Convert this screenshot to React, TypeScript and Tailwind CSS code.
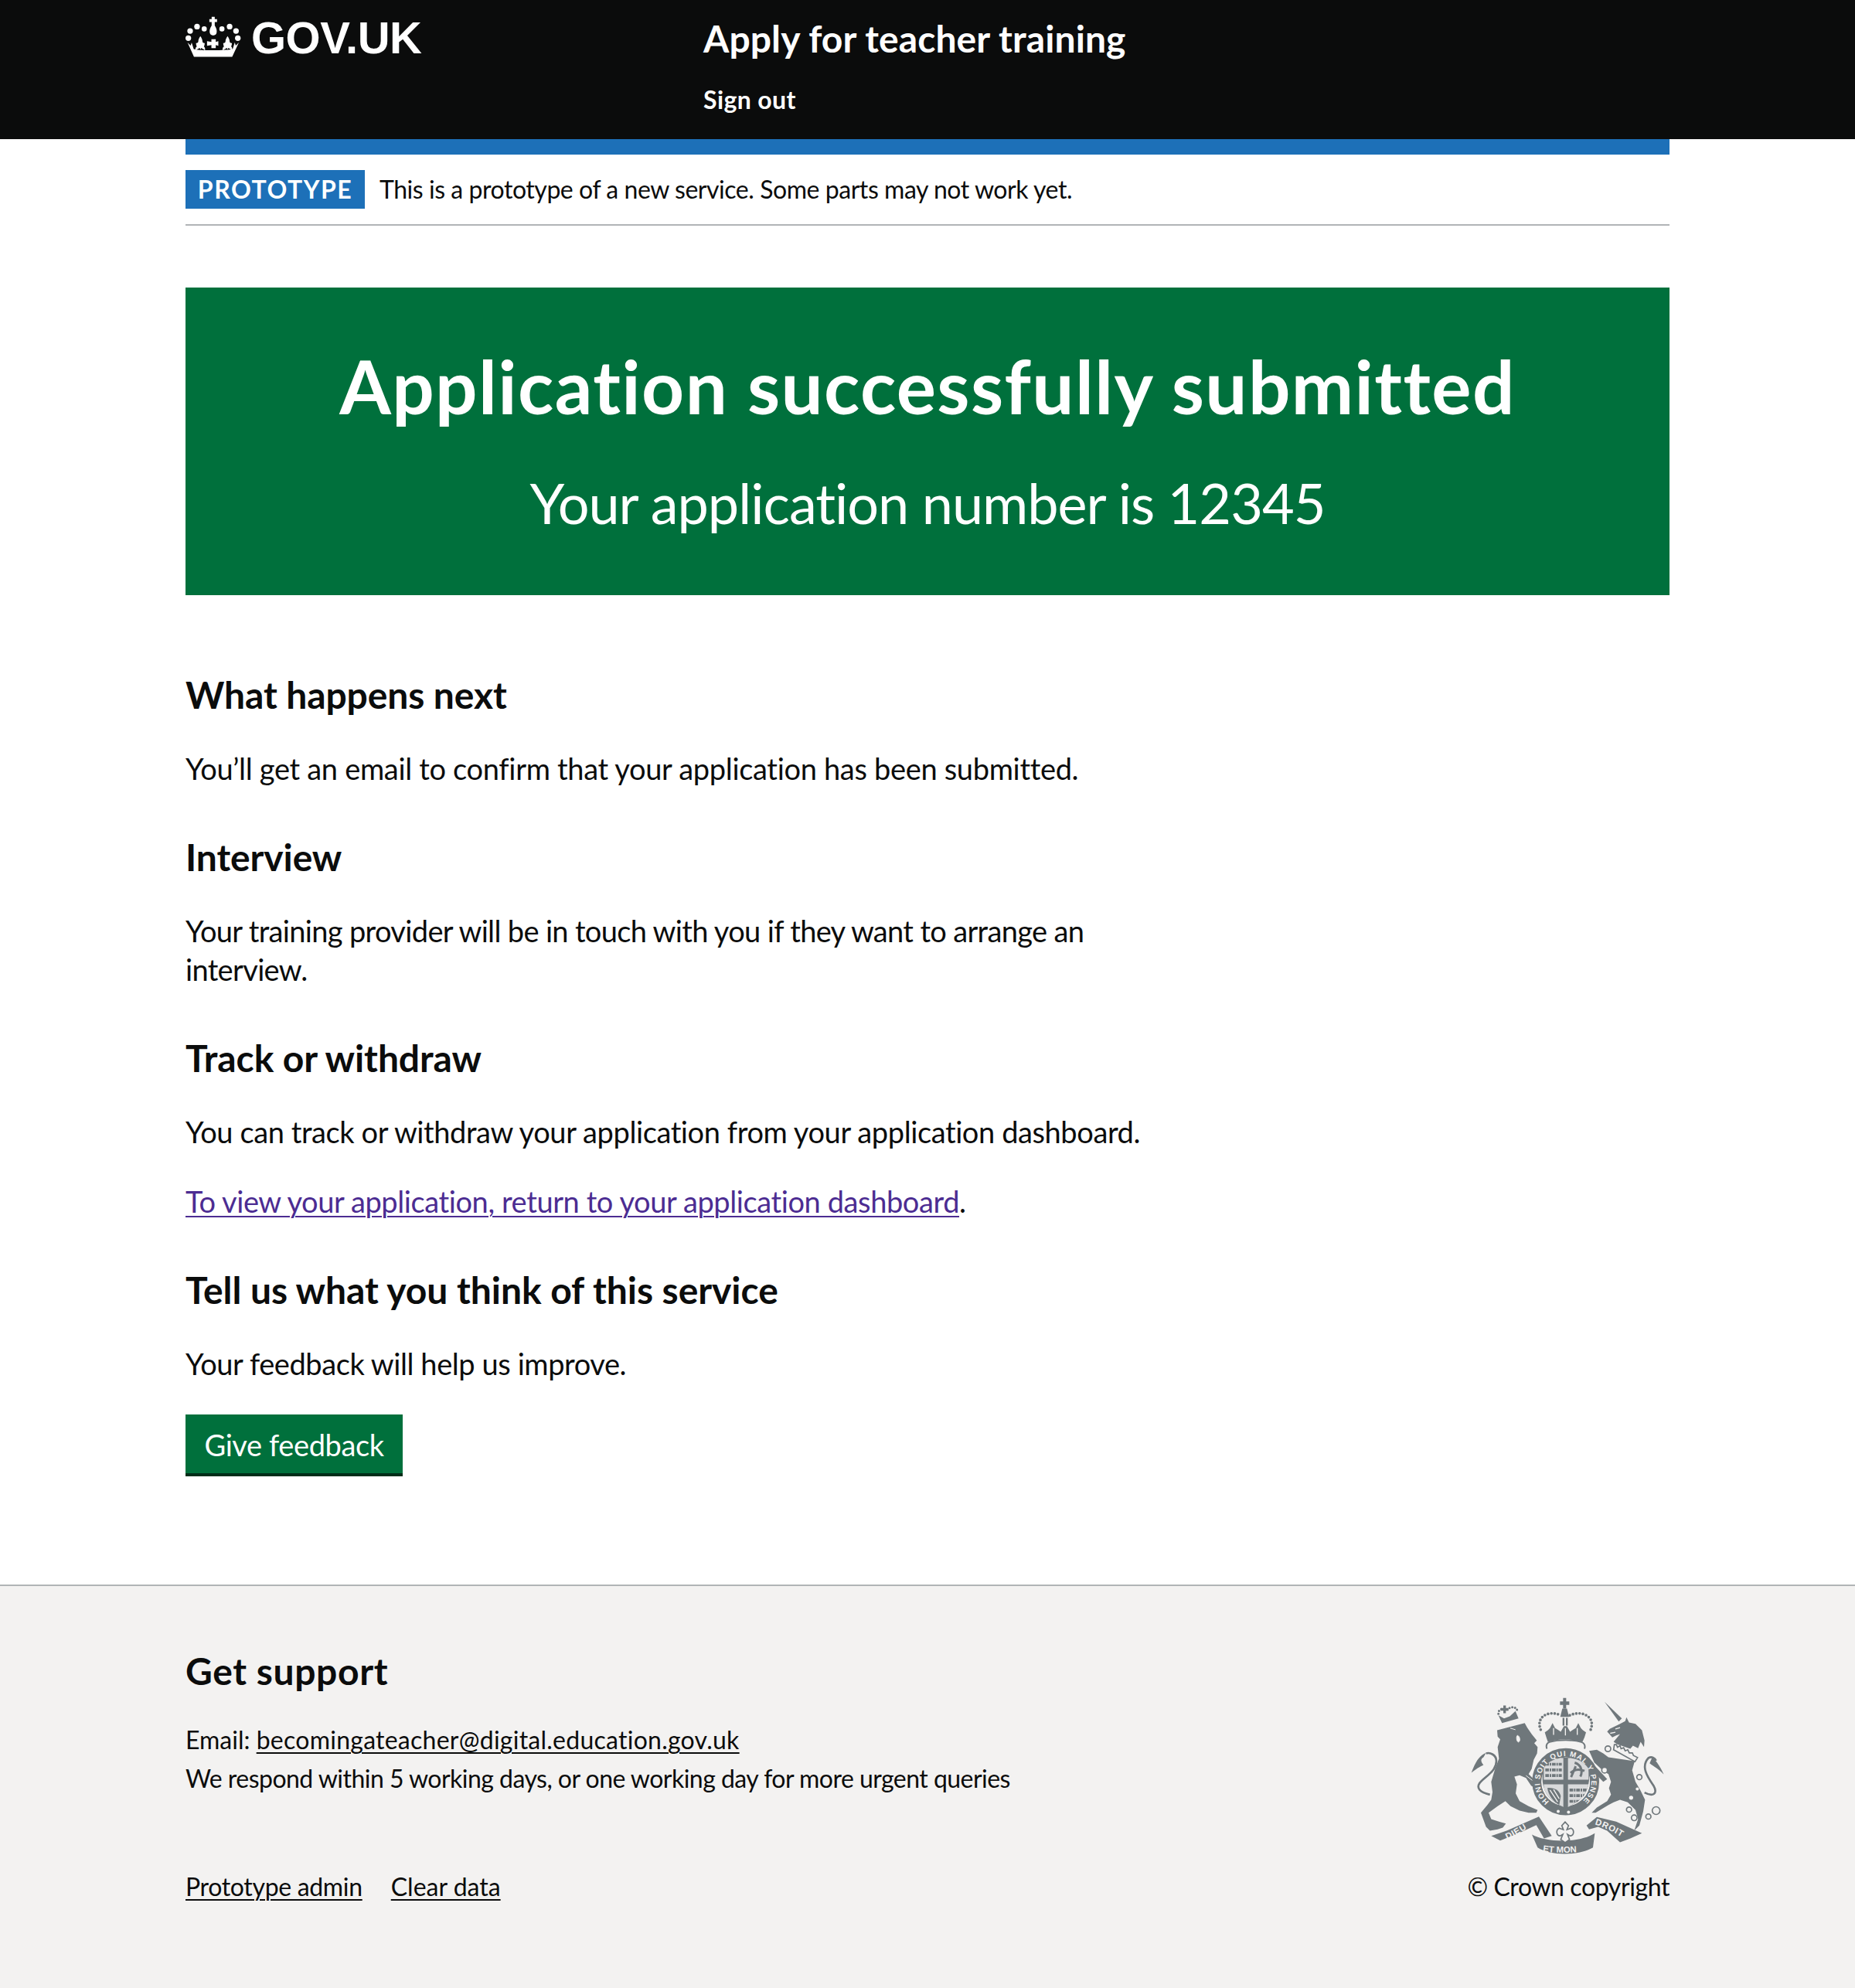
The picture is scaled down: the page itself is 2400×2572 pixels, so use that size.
function CrownLogo() {
  return (
    <svg viewBox="60 60 220 165" className="w-[73px] h-[55px] shrink-0" fill="#fff">
      <path d="M162 65h12v9h9v11h-9v14c8 12 10 24 6 32-3 5-8 6-12 6s-9-1-12-6c-4-8-2-20 6-32V85h-9V74h9z" />
      <circle cx="105" cy="103" r="11" />
      <circle cx="133" cy="112" r="10" />
      <circle cx="202" cy="112" r="10" />
      <circle cx="232" cy="103" r="11" />
      <circle cx="78" cy="120" r="11" />
      <circle cx="257" cy="120" r="11" />
      <circle cx="71" cy="148" r="11" />
      <circle cx="264" cy="148" r="11" />
      <path d="M161 152h17v11l10-3v18l-10-3v12h-17v-12l-17 3v-18l17 3z" />
      <path d="M118 140c5 8 8 13 8 20 0 5 3 8 9 7 0 5-1 9-3 14 4 3 5 8 4 15-6-6-12-8-15-10l-2 6-4-6c-4 3-10 5-16 10-1-7 0-12 5-15-2-5-3-9-3-14 6 1 9-2 9-7 0-7 3-12 8-20z" />
      <path d="M224 140c5 8 8 13 8 20 0 5 3 8 9 7 0 5-1 9-3 14 4 3 5 8 4 15-6-6-12-8-15-10l-2 6-4-6c-4 3-10 5-16 10-1-7 0-12 5-15-2-5-3-9-3-14 6 1 9-2 9-7 0-7 3-12 8-20z" />
      <path d="M68 165l12 12 4-12 8 26c20 6 130 6 152 0l8-26 4 12 12-12-26 56H93z" />
    </svg>
  )
}

function RoyalArms() {
  const c = '#6f777b'
  const bg = '#f3f2f1'
  return (
    <svg viewBox="65 50 765 620" className="w-[255px] h-[207px] mr-[4px]" fill={c}>
      <defs>
        <path id="garter" d="M375 457A100 100 0 1 1 503 457" />
        <path id="ribbon-left" d="M212 604C245 590 280 566 312 548" />
        <path id="ribbon-mid" d="M350 650C400 658 480 658 528 646" />
        <path id="ribbon-right" d="M552 546C590 556 630 578 668 602" />
        <clipPath id="shield-clip">
          <path d="M352 330C370 300 400 288 439 286 480 288 510 300 528 330 534 360 530 400 512 430 494 456 466 470 439 482 412 470 384 456 366 430 348 400 344 360 352 330Z" />
        </clipPath>
      </defs>

      {/* lion */}
      <path d="M173 180L280 152 290 170 307 195 327 220 317 230 330 245 328 270 315 295 307 330 295 350 315 370 340 385 345 405 325 408 305 395 285 365 260 355 240 360 250 390 245 425 260 455 295 475 330 490 325 500 295 500 260 492 225 475 205 455 175 475 140 500 150 525 180 535 207 542 195 558 175 565 145 570 130 555 110 500 135 470 150 450 155 420 150 380 165 330 180 290 175 245 185 215 175 205Z" />
      <path d="M145 430C105 420 92 405 105 385 125 360 170 340 170 300 170 275 145 265 130 270" fill="none" stroke={c} strokeWidth="8" />
      <path d="M130 268C105 278 90 300 73 345 95 328 105 322 120 315 107 300 110 290 120 285Z" />
      <path d="M224 172L244 178M252 200C246 204 248 224 256 226 264 222 262 204 252 200Z" fill={bg} stroke={bg} strokeWidth="3" />
      <path d="M285 356L332 392" fill="none" stroke={bg} strokeWidth="3" />
      {/* lion crown */}
      <path d="M197 84h10v10h10v10h-10v10h-10v-10h-10V94h10z" />
      <path d="M192 152L178 122 200 134 222 126 244 106 256 134Z" />
      <path d="M178 116C176 100 196 92 205 102M212 100C226 86 250 88 252 108" fill="none" stroke={c} strokeWidth="9" strokeDasharray="0 11" strokeLinecap="round" />

      {/* main crown */}
      <path d="M429 55h12v13h12v14h-12v14h-12V82h-12V68h12z" />
      <path d="M426 96h18l8 32h-34z" />
      <path d="M427 132h7v30h-7zM440 132h7v30h-7z" />
      <path d="M342 178C322 130 370 100 420 122M455 122C505 100 556 130 536 178" fill="none" stroke={c} strokeWidth="11" strokeDasharray="0 13" strokeLinecap="round" />
      <path d="M358 188L370 180 378 172 388 152 398 172 408 178 420 186 432 164 444 164 456 186 468 178 478 172 488 152 498 172 506 180 518 188 512 208 504 226C460 212 412 212 370 226L364 208Z" />
      <path d="M392 172V198M438 172V200M484 172V198" fill="none" stroke={bg} strokeWidth="4" />
      <path d="M366 252C362 240 366 230 376 226 410 216 470 216 500 226 512 230 516 240 512 252" fill={bg} stroke={c} strokeWidth="6" />

      {/* garter */}
      <circle cx="439" cy="380" r="112" fill="none" stroke={c} strokeWidth="36" />
      <text fill={bg} fontFamily="'Liberation Sans', sans-serif" fontWeight="700" fontSize="29" textLength="484">
        <textPath href="#garter">HONI SOIT QUI MAL Y PENSE</textPath>
      </text>
      {/* shield */}
      <circle cx="439" cy="380" r="94" fill={bg} />
      <g clipPath="url(#shield-clip)">
        <path d="M346 280h190v210h-190z" fill={c} />
        <path d="M354 288h76v84h-76zM448 288h80v84h-80zM354 390h76v92h-76zM448 390h80v92h-80z" fill="#d9dadb" />
        <path d="M360 312h64M360 334h64M360 356h64M454 412h70M454 434h64M454 456h52" stroke={c} strokeWidth="11" fill="none" strokeDasharray="14 3 6 3" />
        <path d="M474 306C500 314 506 340 496 360M458 346C474 330 492 330 512 338M478 320L460 362" stroke={c} strokeWidth="9" fill="none" />
        <path d="M368 404C394 402 414 412 420 436L414 470C390 456 372 432 368 404Z" fill={c} />
        <path d="M378 412L408 458M392 410L414 446" stroke={bg} strokeWidth="4" fill="none" />
      </g>
      <circle cx="410" cy="495" r="6" fill={bg} />
      <circle cx="450" cy="498" r="6" fill={bg} />

      {/* unicorn */}
      <path d="M590 70L657 134 645 146Z" />
      <path d="M600 185L610 175 650 155 670 145 675 130 685 150 710 155 735 180 745 220 743 245 730 225 720 250 700 240 690 252 640 235 625 225 650 195 635 200 620 208Z" />
      <path d="M605 285L707 300 697 335 710 380 730 415 747 450 740 495 725 550 705 570 720 525 710 490 680 460 650 450 625 460 605 470 555 500 540 500 560 480 600 455 615 430 607 405 615 380 605 350 585 338 550 305 530 260 560 256 585 270Z" />
      <path d="M552 318L600 370 585 380 545 340Z" />
      <path d="M628 236L636 236 640 246 650 240 654 252 664 248 670 260 680 256 686 268 698 268 702 278 718 286 708 302 625 256Z" fill={bg} stroke={c} strokeWidth="5" />
      <path d="M632 175L650 170M612 192L632 188" fill="none" stroke={bg} strokeWidth="4" />
      <circle cx="725" cy="362" r="10" fill={bg} stroke={c} strokeWidth="5" />
      <circle cx="717" cy="408" r="6" fill={bg} />
      <circle cx="693" cy="442" r="8" fill={bg} />
      <path d="M745 422C780 440 797 425 780 395 755 360 730 320 760 288 773 280 785 288 790 298" fill="none" stroke={c} strokeWidth="8" />
      <path d="M775 285C800 305 820 352 820 352 800 330 780 320 765 308Z" />
      <g fill={bg} stroke={c} strokeWidth="5">
        <circle cx="685" cy="488" r="10" />
        <circle cx="705" cy="520" r="11" />
        <circle cx="760" cy="515" r="10" />
        <circle cx="790" cy="492" r="15" />
        <circle cx="603" cy="252" r="11" />
        <circle cx="590" cy="335" r="11" />
      </g>

      {/* motto */}
      <path d="M150 590L210 570 335 515 365 560 385 590 355 600 325 548 260 578 185 608Z" />
      <path d="M560 517L635 535 735 580 690 600 650 615 600 570 565 555 530 565 520 550Z" />
      <path d="M308 585C360 615 490 620 552 580L545 635C490 668 380 668 330 635Z" />
      <path d="M437 536L424 550 430 566 414 560C400 566 402 590 418 590L428 584 420 604 437 616 454 604 446 584 456 590C472 590 474 566 460 560L444 566 450 550Z" fill={bg} stroke={c} strokeWidth="5" />
      <g fill={bg} fontFamily="'Liberation Sans', sans-serif" fontWeight="700" fontSize="34">
        <text letterSpacing="2">
          <textPath href="#ribbon-left">DIEU</textPath>
        </text>
        <text>
          <textPath href="#ribbon-mid">ET MON</textPath>
        </text>
        <text letterSpacing="2">
          <textPath href="#ribbon-right">DROIT</textPath>
        </text>
      </g>
    </svg>
  )
}

export default function App() {
  return (
    <div className="min-h-[2572px] flex flex-col bg-white text-[#0b0c0c] font-['Lato',sans-serif] text-[38px] leading-[50px] [font-variant-ligatures:none]">
      <header className="h-[180px] bg-[#0b0c0c] text-white px-[240px] flex">
        <a className="w-[670px] flex items-start gap-[12px] pt-[20px]">
          <CrownLogo />
          <span className="font-['Liberation_Sans',sans-serif] font-bold text-[58px] leading-[58px] tracking-[-0.5px]">GOV.UK</span>
        </a>
        <div className="flex flex-col">
          <span className="font-bold text-[48px] leading-[60px] tracking-[0.1px] mt-[20px]">Apply for teacher training</span>
          <a className="font-bold text-[32px] leading-[40px] tracking-[0.4px] mt-[29px]">Sign out</a>
        </div>
      </header>

      <div className="mx-[240px] border-t-[20px] border-[#1d70b8]">
        <div className="flex items-center gap-[19px] py-[20px] border-b-2 border-[#b1b4b6]">
          <strong className="h-[50px] w-[232px] flex items-center justify-center bg-[#1d70b8] text-white font-bold text-[32px] tracking-[1.5px]">PROTOTYPE</strong>
          <span className="text-[32px] tracking-[-0.45px]">This is a prototype of a new service. Some parts may not work yet.</span>
        </div>
      </div>

      <main className="mx-[240px] pt-[80px] pb-[140px]">
        <div className="h-[398px] bg-[#00703c] text-white text-center flex flex-col pt-[77px]">
          <h1 className="font-bold text-[96px] leading-[100px] tracking-[1.4px]">Application successfully submitted</h1>
          <p className="text-[72px] leading-[100px] tracking-[-1px] mt-[51px]">Your application number is 12345</p>
        </div>

        <div className="w-[1270px] mt-[99px] flex flex-col tracking-[-0.4px]">
          <h2 className="font-bold text-[48px] leading-[60px] tracking-[-0.1px] mb-[40px]">What happens next</h2>
          <p className="mb-[60px] tracking-[-0.32px]">You’ll get an email to confirm that your application has been submitted.</p>
          <h2 className="font-bold text-[48px] leading-[60px] tracking-[-0.1px] mb-[40px]">Interview</h2>
          <p className="mb-[60px] tracking-[-0.66px]">Your training provider will be in touch with you if they want to arrange an interview.</p>
          <h2 className="font-bold text-[48px] leading-[60px] tracking-[-0.1px] mb-[40px]">Track or withdraw</h2>
          <p className="mb-[40px]">You can track or withdraw your application from your application dashboard.</p>
          <p className="mb-[60px]">
            <a className="text-[#4c2c92] underline decoration-2 underline-offset-[4px]">To view your application, return to your application dashboard</a>.
          </p>
          <h2 className="font-bold text-[48px] leading-[60px] tracking-[-0.05px] mb-[40px]">Tell us what you think of this service</h2>
          <p className="mb-[41px] tracking-[-0.42px]">Your feedback will help us improve.</p>
          <a className="self-start h-[80px] w-[281px] flex items-center justify-center pt-[2px] bg-[#00703c] text-white border-b-4 border-[#002d18]">Give feedback</a>
        </div>
      </main>

      <footer className="flex-1 bg-[#f3f2f1] border-t-2 border-[#b1b4b6] px-[240px] pt-[80px] pb-[106px] text-[32px] flex justify-between items-end">
        <div>
          <h2 className="font-bold text-[48px] leading-[60px] tracking-[0.6px] mb-[34px]">Get support</h2>
          <p>Email: <a className="underline decoration-2 underline-offset-[4px] tracking-[0.25px]">becomingateacher@digital.education.gov.uk</a></p>
          <p className="tracking-[-0.53px]">We respond within 5 working days, or one working day for more urgent queries</p>
          <div className="flex gap-[37px] mt-[90px]">
            <a className="underline decoration-2 underline-offset-[4px] tracking-[-0.33px]">Prototype admin</a>
            <a className="underline decoration-2 underline-offset-[4px]">Clear data</a>
          </div>
        </div>
        <div className="flex flex-col items-end">
          <RoyalArms />
          <span className="mt-[14px] tracking-[-0.4px]">© Crown copyright</span>
        </div>
      </footer>
    </div>
  )
}
